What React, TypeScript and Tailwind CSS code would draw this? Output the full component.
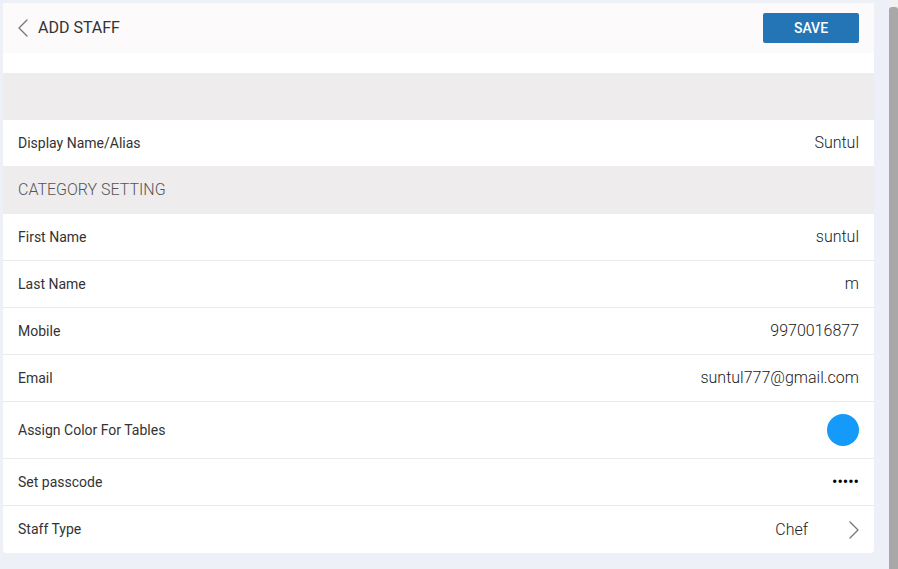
const rows = [
  { label: 'First Name', value: 'suntul' },
  { label: 'Last Name', value: 'm' },
  { label: 'Mobile', value: '9970016877' },
  { label: 'Email', value: 'suntul777@gmail.com' },
];

const Chevron = ({ dir }: { dir: 'left' | 'right' }) => (
  <svg width="10" height="18" viewBox="0 0 10 18" fill="none" className="shrink-0">
    <polyline
      points={dir === 'left' ? '9,1 1,9 9,17' : '1,1 9,9 1,17'}
      stroke="#777"
      strokeWidth="1.3"
      strokeLinecap="round"
      strokeLinejoin="round"
    />
  </svg>
);

export default function App() {
  return (
    <div className="flex h-[569px] w-[898px] bg-[#edf0f7] font-['Roboto',sans-serif] text-[#333]">
      <div className="w-[889px] pl-[3px] pt-[3px]">
        <div className="w-[871px] bg-white rounded-b-sm overflow-hidden">
          <div className="h-[50px] bg-[#fcfafb] flex items-center justify-between px-[15px]">
            <div className="flex items-center gap-[10px]">
              <Chevron dir="left" />
              <span className="text-[16px] text-[#333]">ADD STAFF</span>
            </div>
            <button className="w-[96px] h-[30px] bg-[#2475b5] rounded-[2px] text-white text-[14px] font-medium">
              SAVE
            </button>
          </div>
          <div className="h-[20px]" />
          <div className="h-[47px] bg-[#eeeced]" />
          <div className="h-[46px] flex items-center justify-between px-[15px]">
            <span className="text-[14px]">Display Name/Alias</span>
            <span className="text-[16px] font-light text-[#222]">Suntul</span>
          </div>
          <div className="h-[48px] bg-[#eeeced] flex items-center px-[15px]">
            <span className="text-[16px] text-[#555] font-light">CATEGORY SETTING</span>
          </div>
          {rows.map((r) => (
            <div key={r.label} className="h-[47px] flex items-center justify-between px-[15px] border-b border-[#ebebeb]">
              <span className="text-[14px]">{r.label}</span>
              <span className="text-[16px] font-light text-[#222]">{r.value}</span>
            </div>
          ))}
          <div className="h-[57px] flex items-center justify-between px-[15px] border-b border-[#ebebeb]">
            <span className="text-[14px]">Assign Color For Tables</span>
            <span className="w-[32px] h-[32px] rounded-full bg-[#149af8]" />
          </div>
          <div className="h-[47px] flex items-center justify-between px-[15px] border-b border-[#ebebeb]">
            <span className="text-[14px]">Set passcode</span>
            <span className="text-[16px] text-black">•••••</span>
          </div>
          <div className="h-[47px] flex items-center justify-between px-[15px]">
            <span className="text-[14px]">Staff Type</span>
            <div className="flex items-center gap-[41px]">
              <span className="text-[16px] font-light text-[#222]">Chef</span>
              <Chevron dir="right" />
            </div>
          </div>
        </div>
      </div>
      <div className="w-[9px] flex flex-col">
        <div className="h-[7px] bg-[#f1f1f1]" />
        <div className="flex-1 bg-[#a8a8a8] rounded-t-[3px]" />
      </div>
    </div>
  );
}
